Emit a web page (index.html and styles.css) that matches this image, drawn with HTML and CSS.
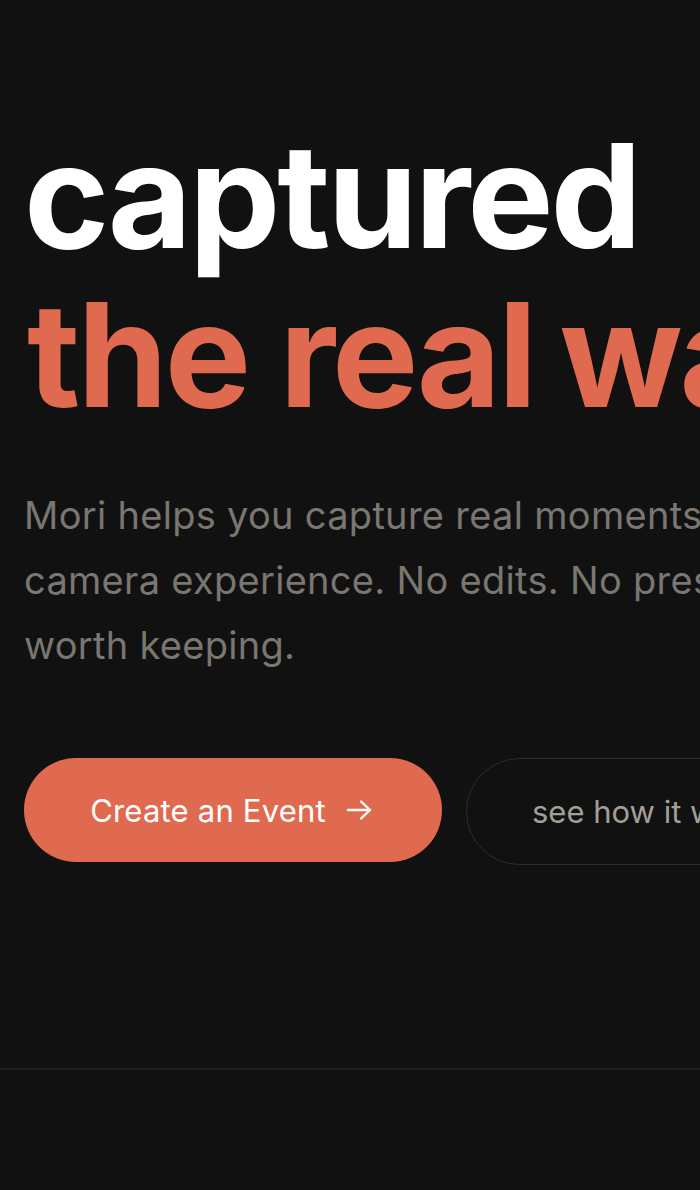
FILE: index.html
```html
<!DOCTYPE html>
<html lang="en">
<head>
<meta charset="utf-8">
<title>Mori</title>
<link rel="stylesheet" href="styles.css">
</head>
<body>
<main class="page">
  <section class="hero">
    <h1 class="hero-title">
      <span class="line line-white">captured</span>
      <span class="line line-accent">the real <span class="word-way">way.</span></span>
    </h1>
    <p class="hero-text">Mori helps you capture real moments with a disposable<br>camera experience. No edits. No pressure. Just memories<br>worth keeping.</p>
    <div class="actions">
      <a class="btn btn-primary" href="#">Create an Event
        <svg class="arrow" viewBox="0 0 26 26" width="26" height="26" fill="none" stroke="currentColor" stroke-width="2.4" stroke-linecap="round" stroke-linejoin="round"><path d="M2 13h22"/><path d="M15 4.5l9 8.5-9 8.5"/></svg>
      </a>
      <a class="btn btn-outline" href="#">see how it works</a>
    </div>
  </section>
  <hr class="divider">
</main>
</body>
</html>
```
FILE: styles.css
```css
html, body {
  margin: 0;
  padding: 0;
  background: #111111;
  overflow: hidden;
}
body {
  width: 700px;
  height: 1190px;
  font-family: Inter, "Noto Sans", sans-serif;
}
.page {
  width: 700px;
}
.hero {
  padding: 116px 0 0 24px;
  height: 1068px;
  box-sizing: border-box;
}
.hero-title {
  margin: 0;
  font-size: 145px;
  font-weight: 700;
  line-height: 159px;
  letter-spacing: -3px;
  white-space: nowrap;
}
.line {
  display: block;
}
.line-white {
  color: #ffffff;
}
.line-accent {
  color: #e06a50;
  padding-left: 3px;
}
.word-way {
  margin-left: -6px;
}
.hero-text {
  margin: 49px 0 0;
  font-size: 38px;
  line-height: 65px;
  color: #7a7670;
  white-space: nowrap;
  letter-spacing: 0.3px;
}
.actions {
  display: flex;
  gap: 24px;
  margin-top: 80px;
  white-space: nowrap;
}
.btn {
  display: inline-flex;
  align-items: center;
  justify-content: center;
  box-sizing: border-box;
  border-radius: 60px;
  text-decoration: none;
  font-size: 31px;
  font-weight: 400;
  flex-shrink: 0;
}
.btn-primary {
  width: 418px;
  height: 104px;
  background: #e06a50;
  color: #ffffff;
  gap: 20px;
  padding-right: 4px;
  letter-spacing: 0.2px;
}
.btn-primary .arrow {
  display: block;
}
.btn-outline {
  height: 107px;
  padding: 0 64px 0 65px;
  border: 1.5px solid #2e2c2a;
  color: #a39f98;
}
.divider {
  margin: 0;
  border: 0;
  height: 2px;
  background: #1e1e1e;
}
```
